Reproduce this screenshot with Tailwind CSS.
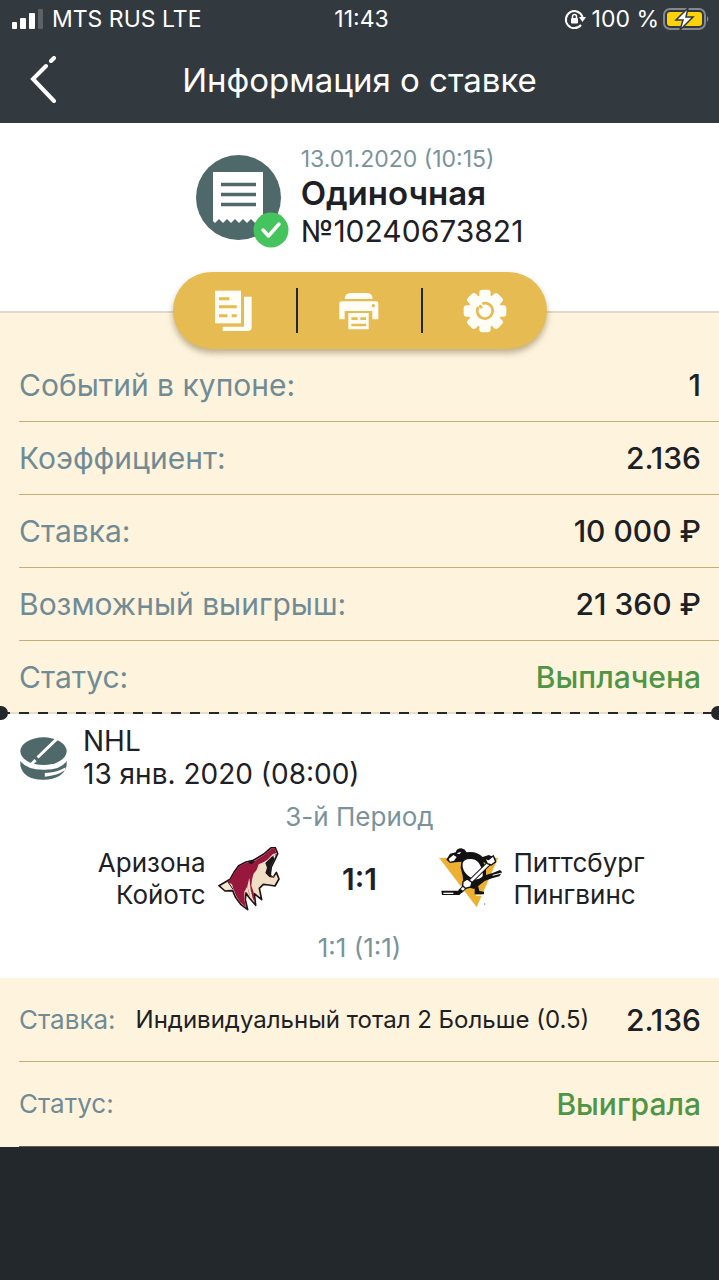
<!DOCTYPE html>
<html lang="ru">
<head>
  <meta charset="UTF-8">
  <meta name="viewport" content="width=device-width, initial-scale=1">
  <title>Информация о ставке</title>
  <script src="https://cdn.jsdelivr.net/npm/@tailwindcss/browser@4"></script>
</head>
<body class="bg-[#23282c] min-h-screen font-['Inter','Liberation_Sans',sans-serif] text-[#1d2024]">
  <header class="bg-[#32393f] text-white">
    <!-- Status bar -->
    <div class="grid grid-cols-3 items-center h-9 pt-[2px] pl-3 pr-2 text-[23px] leading-8">
      <div class="flex items-center gap-2 whitespace-nowrap">
        <svg class="w-8 h-5 shrink-0" viewBox="0 0 32 20" fill="#fff">
          <rect x="0" y="13" width="5" height="7" rx="1"/>
          <rect x="8" y="9" width="6" height="11" rx="1"/>
          <rect x="17" y="4" width="6" height="16" rx="1"/>
          <rect x="26" y="0" width="5" height="20" rx="1" fill="#5c6266"/>
        </svg>
        <span>MTS RUS LTE</span>
      </div>
      <div class="text-center">11:43</div>
      <div class="flex items-center justify-end gap-1 whitespace-nowrap">
        <svg class="w-6 h-6 shrink-0" viewBox="0 0 24 24" fill="none" stroke="#fff" stroke-width="2">
          <path d="M18.5 10A8.5 8.5 0 1 0 17 18"/>
          <path d="M15 10h7l-3.5 5z" fill="#fff" stroke="none"/>
          <rect x="7" y="11" width="7" height="5.5" rx="1" fill="#fff" stroke="none"/>
          <path d="M8.5 11V9.5a2 2 0 0 1 4 0V11" stroke-width="1.5"/>
        </svg>
        <span>100 %</span>
        <svg class="w-12 h-6 shrink-0" viewBox="0 0 48 24">
          <rect x="1" y="2" width="41" height="20" rx="6" fill="none" stroke="#85898c" stroke-width="2"/>
          <rect x="4" y="5" width="35" height="14" rx="3" fill="#fcd20a"/>
          <path d="M44 9q3 3 0 6z" fill="#85898c"/>
          <path d="M25 1L13 13h7l-3 10 13-13h-7z" fill="#fff" stroke="#32393f" stroke-width="1.5"/>
        </svg>
      </div>
    </div>
    <div class="grid grid-cols-[1fr_auto_1fr] items-center h-[87px] px-7">
      <a href="#" aria-label="Назад" class="w-8">
        <svg class="w-8 h-12" viewBox="0 0 32 48" fill="none" stroke="#fff" stroke-width="4" stroke-linecap="round">
          <path d="M18 10L5 23l21 22M23 5l3-3"/>
        </svg>
      </a>
      <h1 class="text-[33px] leading-10">Информация о ставке</h1>
    </div>
  </header>

  <main>
    <section class="bg-white h-47 pt-6">
      <div class="flex justify-center gap-5">
        <div class="relative w-[85px] h-[85px] mt-2">
          <svg class="w-full h-full" viewBox="0 0 85 85">
            <circle cx="42.5" cy="42.5" r="42.5" fill="#4f696b"/>
            <path d="M17 17H67V68L63 64 59 68 55 64 51 68 47 64 43 68 39 64 35 68 31 64 27 68 23 64 19 68 17 66z" fill="#fff"/>
            <path d="M25 29.5h35M25 39.5h35M25 49.5h35" stroke="#4f696b" stroke-width="3.5"/>
          </svg>
          <svg class="absolute left-[57px] top-[57px] w-9 h-9" viewBox="0 0 36 36">
            <circle cx="18" cy="18" r="17.5" fill="#45c35d"/>
            <path d="M10 18l5.5 6L26 12" fill="none" stroke="#fff" stroke-width="3.5" stroke-linecap="round" stroke-linejoin="round"/>
          </svg>
        </div>
        <div>
          <p class="text-[23px] leading-6 text-[#7a939b]">13.01.2020 (10:15)</p>
          <p class="text-[33px] leading-11 font-semibold">Одиночная</p>
          <p class="text-[30px] leading-8">№10240673821</p>
        </div>
      </div>
      <!-- Actions -->
      <div class="relative z-10 flex mx-auto mt-[25px] w-[374px] h-[77px] py-4 rounded-full bg-[#e6bb51] shadow-[0_4px_6px_rgba(90,70,20,0.4)]">
        <button type="button" aria-label="Копировать" class="flex-1 flex items-center justify-center">
          <svg class="w-10 h-11" viewBox="162 90 120 132">
            <path d="M252 113h23v91q0 12-12 12h-75v-13h64z" fill="#fffdf5"/>
            <path d="M165 95h78v98h-78z" fill="#fffdf5"/>
            <path d="M177 119h31M177 143h53M177 170h25M215 170h15" stroke="#e6bb51" stroke-width="9"/>
          </svg>
        </button>
        <span class="w-[2px] bg-[#23282c]"></span>
        <button type="button" aria-label="Печать" class="flex-1 flex items-center justify-center">
          <svg class="w-10 h-10" viewBox="538 95 120 120">
            <path d="M555 119q0-18 18-18h48q18 0 18 18zM545 126h105q6 0 6 6v48h-18v-25h-83v25h-16v-48q0-6 6-6zM566 161h61v49h-61z" fill="#fffdf5"/>
            <path d="M575 178h19M602 178h17M575 197h44" stroke="#e6bb51" stroke-width="8"/>
            <circle cx="641" cy="139" r="5" fill="#e6bb51"/>
          </svg>
        </button>
        <span class="w-[2px] bg-[#23282c]"></span>
        <button type="button" aria-label="Настройки" class="flex-1 flex items-center justify-center">
          <svg class="w-11 h-11" viewBox="-66 -66 132 132">
            <g fill="#fffdf5">
              <rect x="-17" y="-64" width="34" height="128" rx="9"/>
              <rect x="-17" y="-64" width="34" height="128" rx="9" transform="rotate(45)"/>
              <rect x="-17" y="-64" width="34" height="128" rx="9" transform="rotate(90)"/>
              <rect x="-17" y="-64" width="34" height="128" rx="9" transform="rotate(135)"/>
              <circle r="49"/>
            </g>
            <path d="M-20-12A23 23 0 1 0 -8-22M-17-17L-9-9" fill="none" stroke="#e6bb51" stroke-width="8"/>
          </svg>
        </button>
      </div>
    </section>

    <section class="bg-[#fef4de] border-t-2 border-[#dfd9cb] pt-9">
      <dl class="pl-[19px] text-[30px] leading-9">
        <div class="flex justify-between items-center h-[73px] pr-[18px] border-b border-[#c9ad78]">
          <dt class="text-[#718b95]">Событий в купоне:</dt>
          <dd class="font-medium">1</dd>
        </div>
        <div class="flex justify-between items-center h-[73px] pr-[18px] border-b border-[#c9ad78]">
          <dt class="text-[#718b95]">Коэффициент:</dt>
          <dd class="font-medium">2.136</dd>
        </div>
        <div class="flex justify-between items-center h-[73px] pr-[18px] border-b border-[#c9ad78]">
          <dt class="text-[#718b95]">Ставка:</dt>
          <dd class="font-medium">10 000 ₽</dd>
        </div>
        <div class="flex justify-between items-center h-[73px] pr-[18px] border-b border-[#c9ad78]">
          <dt class="text-[#718b95]">Возможный выигрыш:</dt>
          <dd class="font-medium">21 360 ₽</dd>
        </div>
        <div class="flex justify-between items-center h-[71px] pr-[18px]">
          <dt class="text-[#718b95]">Статус:</dt>
          <dd class="font-medium text-[#4f9546]">Выплачена</dd>
        </div>
      </dl>
    </section>

    <section class="relative bg-white pb-3">
      <!-- Tear-off line -->
      <div class="h-[2px] bg-[repeating-linear-gradient(90deg,#23282c_0_10px,#e8dfc4_10px_19px)]"></div>
      <span class="absolute -left-[6px] -top-[6px] size-[14px] rounded-full bg-[#23282c]"></span>
      <span class="absolute -right-[6px] -top-[6px] size-[14px] rounded-full bg-[#23282c]"></span>

      <div class="flex items-center gap-4 pl-5 pt-[11px]">
        <svg class="w-[47px] h-[43px]" viewBox="60 106 140 130">
          <ellipse cx="130" cy="149" rx="70" ry="42" fill="#4f696b"/>
          <path d="M60 178Q76 204 130 205T200 178V192Q190 234 130 235T60 192z" fill="#4f696b"/>
          <path d="M172 110L112 168M106 176L92 190" fill="none" stroke="#fff" stroke-width="9"/>
          <path d="M134 215Q170 213 196 198V206Q172 223 134 226z" fill="#fff"/>
        </svg>
        <div class="text-[28px] leading-[33px]">
          <p>NHL</p>
          <p>13 янв. 2020 (08:00)</p>
        </div>
      </div>

      <p class="mt-2 text-center text-[26px] leading-9 text-[#7a939b]">3-й Период</p>

      <div class="grid grid-cols-[1fr_140px_1fr] items-center mt-2 h-[72px]">
        <div class="flex items-center justify-end gap-3">
          <p class="text-right text-[26px] leading-8">Аризона<br>Койотс</p>
          <svg class="w-16 h-16 mr-2" viewBox="24 32 192 192" stroke-linejoin="round">
            <path d="M27 148L60 129 72 108 86 88 108 77 130 72 160 54 185 33 195 32 203 52 196 68 184 92 181 112 190 122 199 108 207 128 195 149 176 146 160 144 148 156 155 190 133 172 137 207 116 182 108 170 106 190 113 220 92 204 76 182 68 163 45 164z" fill="#f0dfc4" stroke="#231318" stroke-width="5"/>
            <path d="M50 136L62 129 74 108 87 90 109 79 131 75 161 57 186 36 194 35 199 50 188 54 172 70 160 78 146 84 140 100 130 114 126 130 124 148 131 168 134 195 118 176 112 150 103 166 103 190 108 213 92 199 79 180 71 160 66 144z" fill="#98183d"/>
            <path d="M118 124L112 150 120 180 130 194 122 160z" fill="#f0dfc4"/>
            <path d="M166 80L184 62 199 53 195 66 183 90 180 112 188 124 178 122 166 110 171 94z" fill="#1b171b"/>
            <path d="M114 79L127 73 134 76 124 84z" fill="#1b171b"/>
            <path d="M190 58l7-3-4 12zM183 116l4-9 4 14z" fill="#fff"/>
            <path d="M34 150L54 138 66 156 46 160z" fill="#f6e9d6"/>
            <path d="M54 137L69 159" stroke="#231318" stroke-width="3"/>
          </svg>
        </div>
        <p class="text-center text-[30px] leading-8 font-semibold">1:1</p>
        <div class="flex items-center gap-3">
          <svg class="w-16 h-16 ml-2" viewBox="24 34 192 192" stroke-linejoin="round">
            <!-- Gold triangle behind the skater -->
            <path d="M28 67H204L140 214z" fill="#eeb02f" stroke="#d8c08a" stroke-width="1"/>
            <!-- Body and arms -->
            <path d="M49 72L60 54 77 50Q80 38 94 38 105 40 110 50 138 45 158 64L176 58 196 66 196 82 178 86 160 80 168 100 168 118 188 112 210 103 217 110 208 122 186 128 164 136 146 150 132 160 112 154 100 142 98 120 92 96 94 78 76 80 60 82z" fill="#131213"/>
            <path d="M98 82Q104 68 124 70 142 72 150 88 160 106 158 122 148 132 134 132 112 122 102 106 96 94 98 82z" fill="#fff"/>
            <path d="M56 70L70 58 80 64 72 75 60 78zM80 53L94 48 88 56z" fill="#fff"/>
            <!-- Stick -->
            <path d="M184 76L90 168" stroke="#131213" stroke-width="14"/>
            <path d="M184 76L92 166" stroke="#fff" stroke-width="8"/>
            <path d="M164 66L175 72 190 60 197 78 184 88 172 84z" fill="#fff" stroke="#131213" stroke-width="4"/>
            <path d="M99 138L112 130 126 140 122 154 106 158 98 150z" fill="#fff" stroke="#131213" stroke-width="4"/>
            <path d="M34 165H84L92 160 100 166 88 178H36z" fill="#131213"/>
            <path d="M40 173H70" stroke="#fff" stroke-width="4"/>
            <!-- Skates -->
            <path d="M134 158L144 150 148 166 162 168V176H134z" fill="#131213"/>
            <path d="M138 179H162M188 119L216 112" stroke="#fff" stroke-width="3"/>
            <circle cx="164" cy="205" r="2" fill="#777"/>
          </svg>
          <p class="text-[26px] leading-8">Питтсбург<br>Пингвинс</p>
        </div>
      </div>

      <p class="mt-[15px] text-center text-[26px] leading-9 text-[#7a939b]">1:1 (1:1)</p>
    </section>

    <section class="bg-[#fef4de]">
      <dl class="pl-[19px] leading-9">
        <div class="flex items-center h-[84px] pr-[18px] border-b border-[#c9ad78]">
          <dt class="text-[26px] text-[#718b95]">Ставка:</dt>
          <dd class="ml-5 text-[24px] whitespace-nowrap">Индивидуальный тотал 2 Больше (0.5)</dd>
          <dd class="ml-auto text-[30px] font-medium">2.136</dd>
        </div>
        <div class="flex justify-between items-center h-[85px] pr-[18px] border-b border-[#6b5f43]">
          <dt class="text-[26px] text-[#718b95]">Статус:</dt>
          <dd class="text-[30px] font-medium text-[#4f9546]">Выиграла</dd>
        </div>
      </dl>
    </section>
  </main>
</body>
</html>
